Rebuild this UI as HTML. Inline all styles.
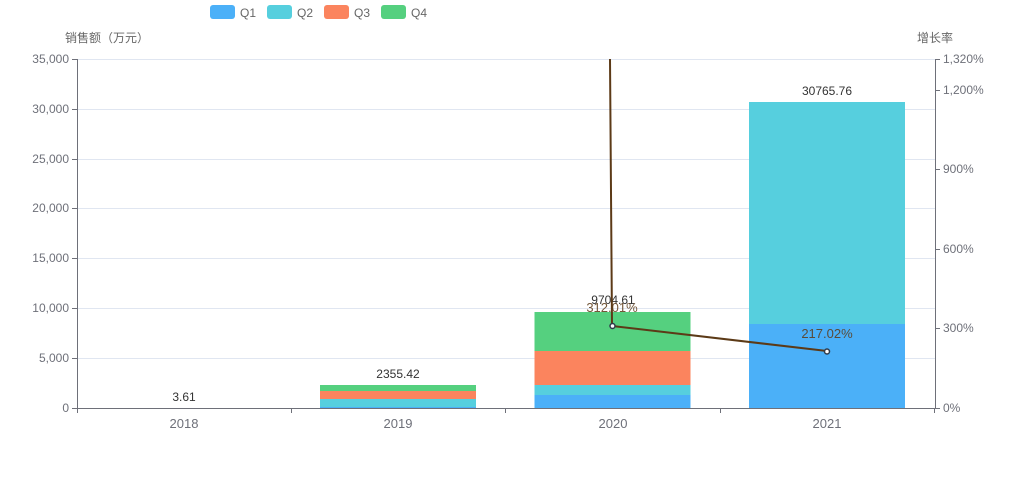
<!DOCTYPE html>
<html><head><meta charset="utf-8"><style>
html,body{margin:0;padding:0;background:#fff;}
svg{display:block;font-family:"Liberation Sans","Noto Sans CJK SC",sans-serif;}
</style></head><body>
<svg width="1025" height="500" viewBox="0 0 1025 500" xmlns="http://www.w3.org/2000/svg">
<!-- legend -->
<rect x="210" y="5" width="25" height="14" rx="3" fill="#4bb0f8"/>
<text x="240" y="17" font-size="12" fill="#666">Q1</text>
<rect x="267" y="5" width="25" height="14" rx="3" fill="#56cfde"/>
<text x="297" y="17" font-size="12" fill="#666">Q2</text>
<rect x="324" y="5" width="25" height="14" rx="3" fill="#fb845e"/>
<text x="354" y="17" font-size="12" fill="#666">Q3</text>
<rect x="381" y="5" width="25" height="14" rx="3" fill="#55d07f"/>
<text x="411" y="17" font-size="12" fill="#666">Q4</text>
<text x="65" y="42" font-size="12" fill="#666">销售额（万元）</text>
<text x="953" y="42" font-size="12" fill="#666" text-anchor="end">增长率</text>
<!-- grid -->
<g stroke="#e0e6f1" stroke-width="1">
<line x1="77" y1="59.5" x2="935" y2="59.5"/>
<line x1="77" y1="109.5" x2="935" y2="109.5"/>
<line x1="77" y1="159.5" x2="935" y2="159.5"/>
<line x1="77" y1="208.5" x2="935" y2="208.5"/>
<line x1="77" y1="258.5" x2="935" y2="258.5"/>
<line x1="77" y1="308.5" x2="935" y2="308.5"/>
<line x1="77" y1="358.5" x2="935" y2="358.5"/>
</g>
<!-- axes -->
<g stroke="#6e7079" stroke-width="1">
<line x1="77.5" y1="59" x2="77.5" y2="408"/>
<line x1="935.5" y1="59" x2="935.5" y2="408"/>
<line x1="77" y1="408.5" x2="935" y2="408.5"/>
<line x1="72" y1="59.5" x2="77" y2="59.5"/><line x1="72" y1="109.5" x2="77" y2="109.5"/><line x1="72" y1="159.5" x2="77" y2="159.5"/><line x1="72" y1="208.5" x2="77" y2="208.5"/><line x1="72" y1="258.5" x2="77" y2="258.5"/><line x1="72" y1="308.5" x2="77" y2="308.5"/><line x1="72" y1="358.5" x2="77" y2="358.5"/><line x1="72" y1="408.5" x2="77" y2="408.5"/>
<line x1="935" y1="59.5" x2="940" y2="59.5"/><line x1="935" y1="90.5" x2="940" y2="90.5"/><line x1="935" y1="169.5" x2="940" y2="169.5"/><line x1="935" y1="249.5" x2="940" y2="249.5"/><line x1="935" y1="328.5" x2="940" y2="328.5"/><line x1="935" y1="408.5" x2="940" y2="408.5"/>
<line x1="77.5" y1="408" x2="77.5" y2="413"/><line x1="291.5" y1="408" x2="291.5" y2="413"/><line x1="505.5" y1="408" x2="505.5" y2="413"/><line x1="720.5" y1="408" x2="720.5" y2="413"/><line x1="934.5" y1="408" x2="934.5" y2="413"/>
</g>
<g font-size="12" fill="#6e7079" text-anchor="end">
<text x="69" y="63">35,000</text><text x="69" y="113">30,000</text><text x="69" y="163">25,000</text><text x="69" y="212">20,000</text><text x="69" y="262">15,000</text><text x="69" y="312">10,000</text><text x="69" y="362">5,000</text><text x="69" y="412">0</text>
</g>
<g font-size="12" fill="#6e7079">
<text x="943" y="63">1,320%</text><text x="943" y="94">1,200%</text><text x="943" y="173">900%</text><text x="943" y="253">600%</text><text x="943" y="332">300%</text><text x="943" y="412">0%</text>
</g>
<g font-size="13" fill="#6e7079" text-anchor="middle">
<text x="184" y="428">2018</text><text x="398" y="428">2019</text><text x="613" y="428">2020</text><text x="827" y="428">2021</text>
</g>
<!-- bars -->
<rect x="320" y="385" width="156" height="6" fill="#55d07f"/>
<rect x="320" y="391" width="156" height="8" fill="#fb845e"/>
<rect x="320" y="399" width="156" height="8" fill="#56cfde"/>
<rect x="320" y="407" width="156" height="1" fill="#4bb0f8"/>
<rect x="534.5" y="312" width="156" height="39" fill="#55d07f"/>
<rect x="534.5" y="351" width="156" height="34" fill="#fb845e"/>
<rect x="534.5" y="385" width="156" height="10" fill="#56cfde"/>
<rect x="534.5" y="395" width="156" height="13" fill="#4bb0f8"/>
<rect x="749" y="102" width="156" height="222" fill="#56cfde"/>
<rect x="749" y="324" width="156" height="84" fill="#4bb0f8"/>
<g font-size="12" fill="#333" text-anchor="middle">
<text x="184" y="401">3.61</text><text x="398" y="378">2355.42</text><text x="613" y="304">9704.61</text><text x="827" y="95">30765.76</text>
</g>
<!-- line -->
<polyline points="610,59 612,326 827,351" fill="none" stroke="#5c3a17" stroke-width="2"/>
<circle cx="612.5" cy="326" r="2.5" fill="#fff" stroke="#2f3a4a" stroke-width="1.5"/>
<circle cx="827" cy="351.5" r="2.5" fill="#fff" stroke="#2f3a4a" stroke-width="1.5"/>
<g font-size="13" fill="#5c3a17" text-anchor="middle" opacity="0.85">
<text x="612" y="312">312.01%</text><text x="827" y="338">217.02%</text>
</g>
</svg>
</body></html>
